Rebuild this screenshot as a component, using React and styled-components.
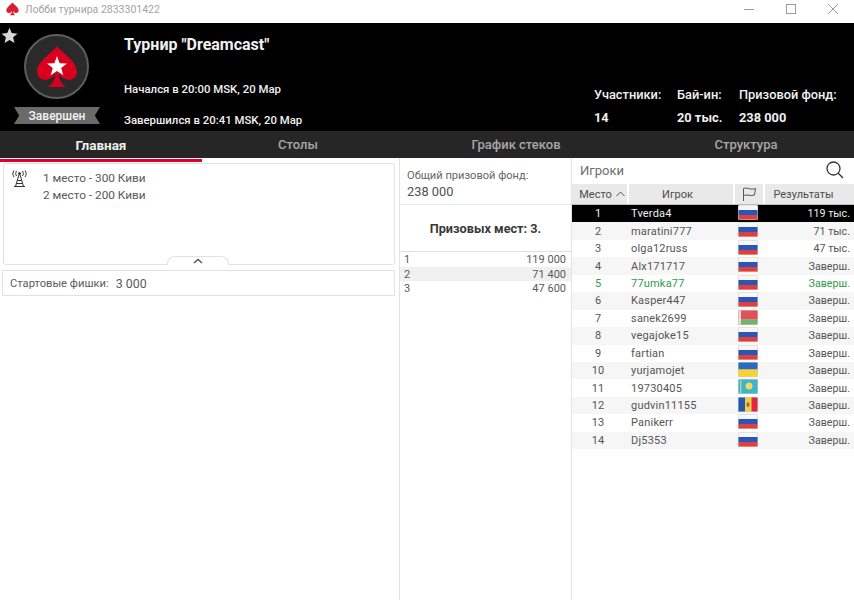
import React from 'react'
import styled, { createGlobalStyle } from 'styled-components'

const GlobalStyle = createGlobalStyle`
  html, body { margin: 0; padding: 0; background: #fff; }
  body { font-family: Roboto, "Liberation Sans", sans-serif; }
  * { box-sizing: border-box; }
`

const SPADE = 'M21 1 C25 7 41 16 41 27 C41 34 33 37 27 33 C24 31 23 29 22.5 28 C23 34 25 39 30 42 L12 42 C17 39 19 34 19.5 28 C19 29 18 31 15 33 C9 37 1 34 1 27 C1 16 17 7 21 1 Z'

const players = [
  { place: 1, name: 'Tverda4', flag: 'ru', result: '119 тыс.', me: true },
  { place: 2, name: 'maratini777', flag: 'ru', result: '71 тыс.' },
  { place: 3, name: 'olga12russ', flag: 'ru', result: '47 тыс.' },
  { place: 4, name: 'Alx171717', flag: 'ru', result: 'Заверш.' },
  { place: 5, name: '77umka77', flag: 'ru', result: 'Заверш.', friend: true },
  { place: 6, name: 'Kasper447', flag: 'ru', result: 'Заверш.' },
  { place: 7, name: 'sanek2699', flag: 'by', result: 'Заверш.' },
  { place: 8, name: 'vegajoke15', flag: 'ru', result: 'Заверш.' },
  { place: 9, name: 'fartian', flag: 'ru', result: 'Заверш.' },
  { place: 10, name: 'yurjamojet', flag: 'ua', result: 'Заверш.' },
  { place: 11, name: '19730405', flag: 'kz', result: 'Заверш.' },
  { place: 12, name: 'gudvin11155', flag: 'md', result: 'Заверш.' },
  { place: 13, name: 'Panikerr', flag: 'ru', result: 'Заверш.' },
  { place: 14, name: 'Dj5353', flag: 'ru', result: 'Заверш.' },
]

const payouts = [
  { place: 1, sum: '119 000' },
  { place: 2, sum: '71 400' },
  { place: 3, sum: '47 600' },
]

const Page = styled.div`
  width: 854px;
  height: 600px;
  display: flex;
  flex-direction: column;
  overflow: hidden;
  background: #fff;
`

const TitleBar = styled.div`
  height: 23px;
  flex: none;
  display: flex;
  align-items: center;
  padding: 0 0 5px 6px;
  color: #a3a3a3;
  font-size: 10.5px;
`

const TitleText = styled.span`
  margin-left: 6px;
`

const WindowButtons = styled.div`
  margin-left: auto;
  display: flex;
  align-items: center;
  padding-right: 16px;
  gap: 32px;
`

const Header = styled.header`
  height: 108px;
  flex: none;
  background: #000;
  color: #f0f0f0;
  display: flex;
  position: relative;
`

const FavStar = styled.svg`
  position: absolute;
  left: 1px;
  top: 4px;
`

const BadgeColumn = styled.div`
  width: 124px;
  flex: none;
  padding: 11px 0 0 14px;
`

const LogoCircle = styled.div`
  width: 65px;
  height: 65px;
  margin-left: 10px;
  border-radius: 50%;
  background: #2a2a2a;
  border: 2px solid #5d5d5d;
  display: flex;
  align-items: center;
  justify-content: center;
`

const Ribbon = styled.div`
  width: 86px;
  height: 17px;
  margin-top: 8px;
  background: #6a6a6a;
  clip-path: polygon(0 0, 100% 0, 94% 50%, 100% 100%, 0 100%, 6% 50%);
  color: #f4f4f4;
  font-size: 12px;
  font-weight: 500;
  line-height: 19px;
  text-align: center;
`

const InfoColumn = styled.div`
  flex: 1;
  display: flex;
  flex-direction: column;
  padding-top: 13px;
`

const TourName = styled.div`
  font-size: 16px;
  font-weight: 700;
  line-height: 18px;
`

const InfoLine = styled.div`
  font-size: 11.4px;
  font-weight: 500;
  line-height: 14px;
  margin-top: ${p => p.$gap}px;
`

const Stats = styled.div`
  display: flex;
  align-items: flex-start;
  padding: 65px 17px 0 0;
`

const Stat = styled.div`
  width: ${p => p.$width}px;
  font-size: 12.8px;
  font-weight: 500;
  line-height: 14px;
`

const StatValue = styled.div`
  margin-top: 9px;
  font-weight: 700;
`

const Tabs = styled.nav`
  height: 27px;
  flex: none;
  background: #262626;
  display: grid;
  grid-template-columns: 202px 192px 244px 216px;
`

const Tab = styled.div`
  color: ${p => (p.$active ? '#efefef' : '#a8a8a8')};
  font-size: ${p => (p.$active ? 13.5 : 13)}px;
  font-weight: ${p => (p.$active ? 700 : 500)};
  text-align: center;
  line-height: 28px;
  border-bottom: 3px solid ${p => (p.$active ? '#e2002b' : 'transparent')};
`

const Body = styled.main`
  flex: 1;
  display: flex;
  min-height: 0;
`

const LeftPane = styled.section`
  width: 400px;
  flex: none;
  border-right: 1px solid #e4e4e4;
  padding: 5px 4px 0 2px;
`

const InfoCard = styled.div`
  margin-left: 1px;
  height: 102px;
  border: 1px solid #e2e2e2;
  border-radius: 3px;
  position: relative;
  display: flex;
  padding: 6px 0 0 7px;
  color: #585858;
  font-size: 11.8px;
  line-height: 17px;
`

const NoteText = styled.div`
  margin-left: 15px;
`

const Collapse = styled.div`
  position: absolute;
  left: 163px;
  bottom: -1px;
  width: 62px;
  height: 9px;
  background: #fff;
  border: 1px solid #e2e2e2;
  border-bottom: none;
  border-radius: 8px 8px 0 0;
  display: flex;
  align-items: center;
  justify-content: center;
`

const ChipsRow = styled.div`
  margin-top: 5px;
  height: 26px;
  border: 1px solid #e2e2e2;
  display: flex;
  align-items: center;
  padding: 1px 0 0 7px;
  color: #5c5c5c;
  font-size: 11.2px;
`

const ChipsValue = styled.span`
  margin-left: 7px;
  font-size: 12.4px;
`

const MiddlePane = styled.section`
  width: 172px;
  flex: none;
  border-right: 1px solid #e4e4e4;
`

const PoolBox = styled.div`
  height: 47px;
  border-bottom: 1px solid #e8e8e8;
  padding: 10px 0 0 7px;
  color: #666;
  font-size: 11.1px;
  line-height: 16px;
`

const PoolValue = styled.div`
  color: #505050;
  font-size: 12.8px;
`

const PlacesTitle = styled.div`
  height: 47px;
  border-bottom: 1px solid #e0e0e0;
  color: #3a3a3a;
  font-size: 12.7px;
  font-weight: 700;
  line-height: 47px;
  text-align: center;
`

const PayoutRow = styled.div`
  height: 14.5px;
  display: flex;
  justify-content: space-between;
  padding: 0 5px 0 4px;
  background: ${p => (p.$odd ? '#fff' : '#f0f0f0')};
  color: #5a5a5a;
  font-size: 11px;
  line-height: 16px;
`

const RightPane = styled.section`
  flex: 1;
  min-width: 0;
`

const SearchBar = styled.div`
  height: 26px;
  display: flex;
  align-items: center;
  justify-content: space-between;
  padding: 0 10px 2px 8px;
  color: #6c6c6c;
  font-size: 13px;
`

const TableHead = styled.div`
  height: 21px;
  display: grid;
  grid-template-columns: 55px 104px 28px 1fr;
  gap: 2px;
  background: #fff;
  border-bottom: 1px solid #bdbdbd;
`

const HeadCell = styled.div`
  background: #e9e9e9;
  display: flex;
  align-items: center;
  justify-content: center;
  gap: 4px;
  padding-left: ${p => p.$pushRight || 0}px;
  padding-right: ${p => p.$pushLeft || 0}px;
  color: #4c4c4c;
  font-size: 11px;
`

const Row = styled.div`
  height: 17.45px;
  display: grid;
  grid-template-columns: 46px 106px 62px 1fr;
  align-items: center;
  font-size: 11px;
  background: ${p => (p.$me ? '#000' : p.$even ? '#f6f6f6' : '#fff')};
  color: ${p => (p.$me ? '#f0f0f0' : p.$friend ? '#2e9a4e' : '#555')};
`

const PlaceCell = styled.div`
  text-align: center;
  padding-left: 6px;
`

const NameCell = styled.div`
  padding-left: 13px;
  letter-spacing: 0.2px;
`

const FlagCell = styled.div`
  display: flex;
  align-self: start;
  padding-left: 14px;
`

const ResultCell = styled.div`
  text-align: right;
  padding-right: 4px;
  font-size: 10.7px;
`

function Flag({ code }) {
  return (
    <svg width="20" height="15" viewBox="0 0 20 15">
      <rect width="20" height="15" rx="1.5" fill="#cfcfcf" />
      {code === 'ru' && (
        <>
          <rect x="0.5" y="0.5" width="19" height="4.5" fill="#f7f7f7" />
          <rect x="0.5" y="5" width="19" height="5" fill="#2c55b8" />
          <rect x="0.5" y="10" width="19" height="4.5" fill="#e0403a" />
        </>
      )}
      {code === 'by' && (
        <>
          <rect x="0.5" y="0.5" width="19" height="9" fill="#e2505a" />
          <rect x="0.5" y="9.5" width="19" height="5" fill="#6fb56a" />
          <rect x="0.5" y="0.5" width="2.5" height="14" fill="#eedcd8" />
        </>
      )}
      {code === 'ua' && (
        <>
          <rect x="0.5" y="0.5" width="19" height="7" fill="#2f68c0" />
          <rect x="0.5" y="7.5" width="19" height="7" fill="#f8d232" />
        </>
      )}
      {code === 'kz' && (
        <>
          <rect x="0.5" y="0.5" width="19" height="14" fill="#3fb4c8" />
          <circle cx="11" cy="7" r="3.5" fill="#f1d860" />
          <rect x="2" y="1" width="1.5" height="13" fill="#a7cf9c" />
        </>
      )}
      {code === 'md' && (
        <>
          <rect x="0.5" y="0.5" width="6.5" height="14" fill="#2457b0" />
          <rect x="7" y="0.5" width="6.5" height="14" fill="#f5cf3a" />
          <rect x="13.5" y="0.5" width="6" height="14" fill="#e5243f" />
          <ellipse cx="10" cy="7.5" rx="1.6" ry="2.6" fill="#a56a34" />
        </>
      )}
    </svg>
  )
}

function SpadeLogo() {
  return (
    <svg width="42" height="44" viewBox="0 0 42 44">
      <path d={SPADE} fill="#d9001f" />
      <polygon
        points="21,11 23.6,18.2 31,18.4 25.2,23 27.3,30.2 21,26 14.7,30.2 16.8,23 11,18.4 18.4,18.2"
        fill="#fff"
      />
    </svg>
  )
}

export default function App() {
  return (
    <Page>
      <GlobalStyle />
      <TitleBar>
        <svg width="13" height="14" viewBox="0 0 42 44">
          <path d={SPADE} fill="#d9202f" />
        </svg>
        <TitleText>Лобби турнира 2833301422</TitleText>
        <WindowButtons>
          <svg width="10" height="10" viewBox="0 0 10 10"><path d="M0 5.5H10" stroke="#9a9a9a" /></svg>
          <svg width="10" height="10" viewBox="0 0 10 10"><rect x="0.5" y="0.5" width="9" height="9" fill="none" stroke="#9a9a9a" /></svg>
          <svg width="10" height="10" viewBox="0 0 10 10"><path d="M0 0L10 10M10 0L0 10" stroke="#9a9a9a" /></svg>
        </WindowButtons>
      </TitleBar>

      <Header>
        <FavStar width="17" height="17" viewBox="0 0 20 20">
          <polygon points="10,1 12.6,7.2 19.4,7.8 14.2,12.2 15.8,18.9 10,15.4 4.2,18.9 5.8,12.2 0.6,7.8 7.4,7.2" fill="#d8d8d8" />
        </FavStar>
        <BadgeColumn>
          <LogoCircle>
            <SpadeLogo />
          </LogoCircle>
          <Ribbon>Завершен</Ribbon>
        </BadgeColumn>
        <InfoColumn>
          <TourName>Турнир "Dreamcast"</TourName>
          <InfoLine $gap={28}>Начался в 20:00 MSK, 20 Мар</InfoLine>
          <InfoLine $gap={17}>Завершился в 20:41 MSK, 20 Мар</InfoLine>
        </InfoColumn>
        <Stats>
          <Stat $width={83}>Участники:<StatValue>14</StatValue></Stat>
          <Stat $width={62}>Бай-ин:<StatValue>20 тыс.</StatValue></Stat>
          <Stat $width={98}>Призовой фонд:<StatValue>238 000</StatValue></Stat>
        </Stats>
      </Header>

      <Tabs>
        <Tab $active>Главная</Tab>
        <Tab>Столы</Tab>
        <Tab>График стеков</Tab>
        <Tab>Структура</Tab>
      </Tabs>

      <Body>
        <LeftPane>
          <InfoCard>
            <svg width="17" height="18" viewBox="0 0 17 18" fill="none" stroke="#333" strokeWidth="1">
              <circle cx="8.5" cy="3.5" r="1" fill="#333" />
              <path d="M8 4.5L4.5 16.5M9 4.5L12.5 16.5M6.5 10.5H10.5M5.5 13.5H11.5M3 16.5H14" />
              <path d="M5.5 1C4.5 2.5 4.5 4.5 5.5 6M11.5 1C12.5 2.5 12.5 4.5 11.5 6M3 0.5C1.5 2.5 1.5 5 3 7M14 0.5C15.5 2.5 15.5 5 14 7" />
            </svg>
            <NoteText>
              1 место - 300 Киви
              <br />
              2 место - 200 Киви
            </NoteText>
            <Collapse>
              <svg width="10" height="6" viewBox="0 0 10 6"><path d="M1 5L5 1.5L9 5" fill="none" stroke="#555" strokeWidth="1.5" /></svg>
            </Collapse>
          </InfoCard>
          <ChipsRow>
            Стартовые фишки: <ChipsValue>3 000</ChipsValue>
          </ChipsRow>
        </LeftPane>

        <MiddlePane>
          <PoolBox>
            Общий призовой фонд:
            <PoolValue>238 000</PoolValue>
          </PoolBox>
          <PlacesTitle>Призовых мест: 3.</PlacesTitle>
          {payouts.map((p, i) => (
            <PayoutRow key={p.place} $odd={i % 2 === 0}>
              <span>{p.place}</span>
              <span>{p.sum}</span>
            </PayoutRow>
          ))}
        </MiddlePane>

        <RightPane>
          <SearchBar>
            Игроки
            <svg width="18" height="18" viewBox="0 0 18 18" fill="none" stroke="#333" strokeWidth="1.3">
              <circle cx="7.5" cy="7.5" r="6.5" />
              <path d="M12.3 12.3L17 17" />
            </svg>
          </SearchBar>
          <TableHead>
            <HeadCell $pushRight={5}>
              Место
              <svg width="9" height="6" viewBox="0 0 9 6"><path d="M0.5 5L4.5 1L8.5 5" fill="none" stroke="#555" /></svg>
            </HeadCell>
            <HeadCell $pushLeft={7}>Игрок</HeadCell>
            <HeadCell>
              <svg width="15" height="14" viewBox="0 0 15 14" fill="none" stroke="#555">
                <path d="M1.5 14V1.5C5 0 9 3.5 13.5 1.5L12.5 8C9 9.5 5 7 1.5 8.5" />
              </svg>
            </HeadCell>
            <HeadCell $pushLeft={12}>Результаты</HeadCell>
          </TableHead>
          {players.map((p, i) => (
            <Row key={p.place} $me={p.me} $friend={p.friend} $even={i % 2 === 1}>
              <PlaceCell>{p.place}</PlaceCell>
              <NameCell>{p.name}</NameCell>
              <FlagCell><Flag code={p.flag} /></FlagCell>
              <ResultCell>{p.result}</ResultCell>
            </Row>
          ))}
        </RightPane>
      </Body>
    </Page>
  )
}
